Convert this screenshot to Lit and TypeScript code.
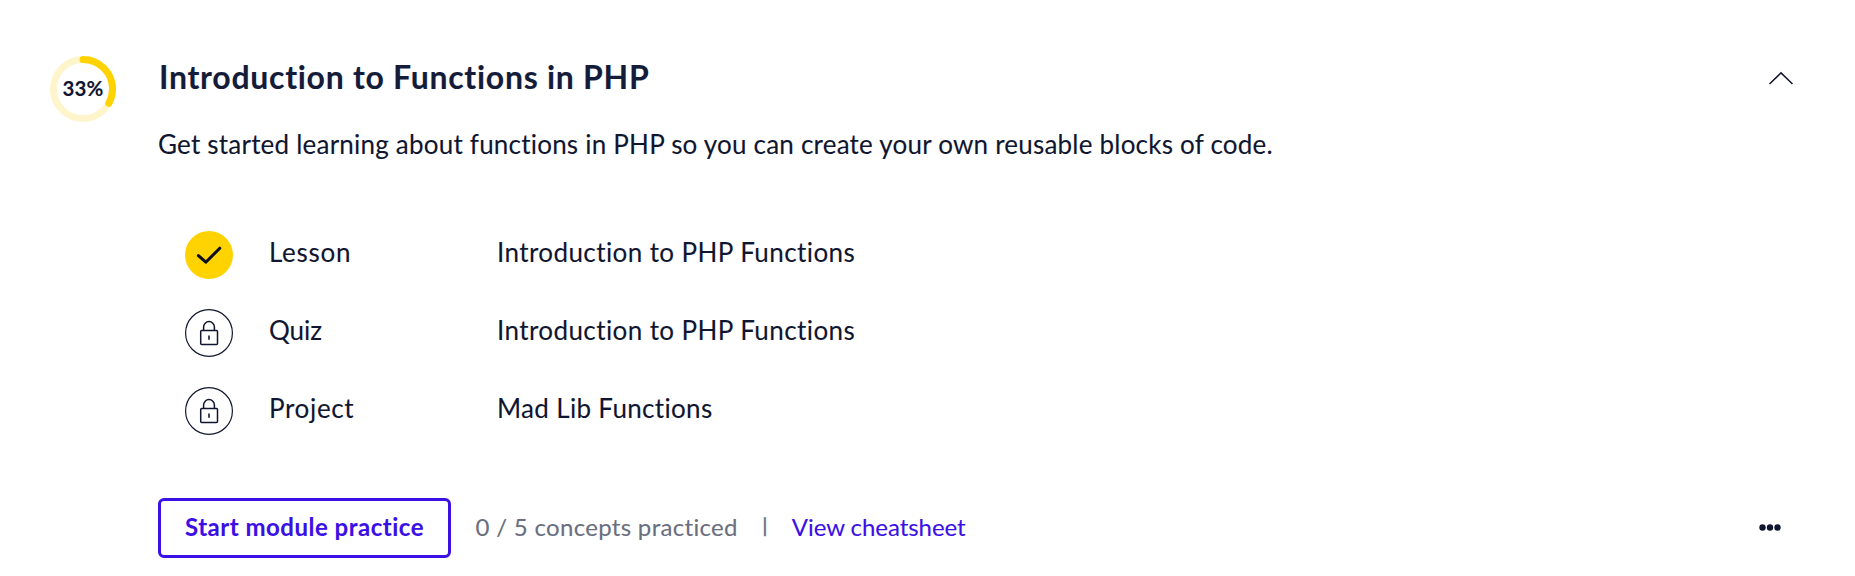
import { LitElement, html, svg, css } from "lit";

interface Item {
  kind: string;
  title: string;
  done: boolean;
}

const ITEMS: Item[] = [
  { kind: "Lesson", title: "Introduction to PHP Functions", done: true },
  { kind: "Quiz", title: "Introduction to PHP Functions", done: false },
  { kind: "Project", title: "Mad Lib Functions", done: false },
];

class ProgressRing extends LitElement {
  static properties = { value: { type: Number } };
  declare value: number;

  static styles = css`
    :host { display: grid; width: 66px; height: 66px; place-items: center; }
    svg, .label { grid-area: 1 / 1; }
    .label { padding-bottom: 2px; font-size: 20.5px; line-height: 24px; font-weight: 700; letter-spacing: 0.2px; color: #10162f; }
  `;

  render() {
    const r = 29.5;
    const c = 2 * Math.PI * r;
    return html`
      <svg width="66" height="66" viewBox="0 0 66 66" fill="none" stroke-width="7">
        <circle cx="33" cy="33" r=${r} stroke="#fff5cc" />
        <circle cx="33" cy="33" r=${r} stroke="#ffd300" stroke-linecap="round"
          stroke-dasharray="${(c * this.value) / 100} ${c}" transform="rotate(-90 33 33)" />
      </svg>
      <span class="label">${this.value}%</span>
    `;
  }
}
customElements.define("progress-ring", ProgressRing);

class StatusIcon extends LitElement {
  static properties = { done: { type: Boolean } };
  declare done: boolean;

  static styles = css`
    :host { display: block; width: 48px; height: 48px; }
    svg { display: block; }
  `;

  render() {
    const check = svg`
      <circle cx="24" cy="24" r="24" fill="#ffd300" />
      <path d="M13.4 24.6 L20.8 31.2 L34.8 17.2" stroke="#0a0d1c" stroke-width="3" stroke-linecap="round" stroke-linejoin="round" />`;
    const lock = svg`
      <circle cx="24" cy="24" r="23.4" stroke="#10162f" stroke-width="1.2" />
      <rect x="15.7" y="21.6" width="16.8" height="13.8" rx="1" stroke="#10162f" stroke-width="1.5" />
      <path d="M18.6 21.5 V18 a5.4 5.4 0 0 1 10.8 0 V21.5" stroke="#10162f" stroke-width="1.5" />
      <path d="M24 26.5 V30.7" stroke="#10162f" stroke-width="1.6" />`;
    return html`<svg width="48" height="48" viewBox="0 0 48 48" fill="none">${this.done ? check : lock}</svg>`;
  }
}
customElements.define("status-icon", StatusIcon);

class AppRoot extends LitElement {
  static styles = css`
    :host {
      display: block;
      box-sizing: border-box;
      height: 576px;
      padding: 56px 61px 0 50px;
      background: #fff;
      color: #10162f;
      font-family: Lato, sans-serif;
      font-size: 26px;
      line-height: 36px;
      -webkit-text-stroke-width: 0.1px;
    }
    .module { display: grid; grid-template-columns: 66px 1fr; column-gap: 42px; }
    .head { display: flex; justify-content: space-between; height: 40px; }
    h2 { margin: 0; padding: 1px 0 0 1px; font-size: 32px; line-height: 40px; font-weight: 700; letter-spacing: 0.71px; color: #141c3a; }
    .chevron { margin-top: 15px; }
    .desc { margin: 30px 0 54px; letter-spacing: 0.215px; }
    .items { list-style: none; margin: 0; padding: 0 0 0 27px; }
    .item { display: grid; grid-template-columns: 48px 192px 1fr; column-gap: 36px; align-items: center; height: 78px; }
    .kind, .title { padding-bottom: 6px; }
    .title { letter-spacing: 0.41px; }
    .item:last-child .title { letter-spacing: 0.33px; }
    .lesson { letter-spacing: 0.7px; }
    .quiz { letter-spacing: 0; }
    .project { letter-spacing: 0.65px; }
    .foot { display: flex; align-items: center; height: 60px; margin-top: 48px; font-size: 24px; line-height: 30px; }
    .practice {
      box-sizing: border-box;
      width: 293px;
      height: 60px;
      padding: 0 0 2px;
      border: 3px solid #3a10e5;
      border-radius: 6px;
      background: #fff;
      color: #3a10e5;
      font: 700 24px/30px Lato, sans-serif;
      letter-spacing: 0.5px;
    }
    .count { margin-left: 24.5px; padding-bottom: 2px; color: #6a6e7e; letter-spacing: 0.31px; }
    .bar { width: 8px; margin-left: 23px; padding-bottom: 4px; font-size: 19px; color: #6a6e7e; text-align: center; -webkit-text-stroke-width: 0.6px; }
    .link { margin-left: 23px; padding-bottom: 2px; color: #3a10e5; text-decoration: none; letter-spacing: -0.05px; }
    .more { margin: 0 12px 0 auto; }
    svg { display: block; }
  `;

  render() {
    return html`
      <section class="module">
        <progress-ring .value=${33}></progress-ring>
        <div>
          <div class="head">
            <h2>Introduction to Functions in PHP</h2>
            <svg class="chevron" width="26" height="16" viewBox="0 0 26 16" fill="none">
              <path d="M1.5 13 L13 1.9 L24.5 13" stroke="#10162f" stroke-width="1.5" />
            </svg>
          </div>
          <p class="desc">Get started learning about functions in PHP so you can create your own reusable blocks of code.</p>
          <ul class="items">
            ${ITEMS.map(
              (i) => html`<li class="item">
                <status-icon .done=${i.done}></status-icon>
                <span class="kind ${i.kind.toLowerCase()}">${i.kind}</span>
                <span class="title">${i.title}</span>
              </li>`
            )}
          </ul>
          <div class="foot">
            <button class="practice">Start module practice</button>
            <span class="count">0 / 5 concepts practiced</span>
            <span class="bar">|</span>
            <a class="link">View cheatsheet</a>
            <svg class="more" width="24" height="8" viewBox="0 0 24 8" fill="#10162f">
              <circle cx="4.5" cy="3.5" r="3.2" />
              <circle cx="12" cy="3.5" r="3.2" />
              <circle cx="19.5" cy="3.5" r="3.2" />
            </svg>
          </div>
        </div>
      </section>
    `;
  }
}
customElements.define("app-root", AppRoot);
